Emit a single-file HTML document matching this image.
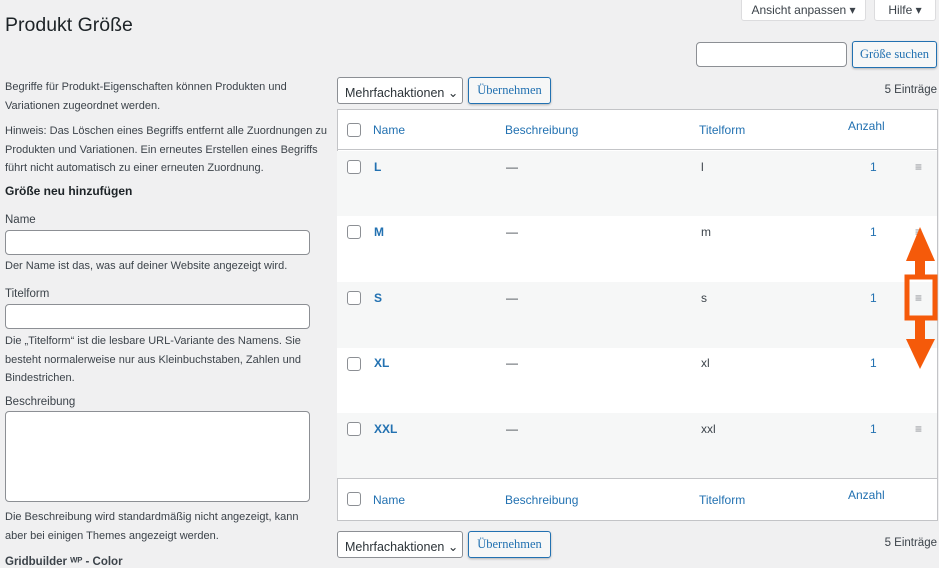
<!DOCTYPE html>
<html><head><meta charset="utf-8"><style>
*{box-sizing:border-box;margin:0;padding:0}
body{width:939px;height:562px;overflow:hidden;background:#f0f0f1;font-family:"Liberation Sans",sans-serif;color:#3c434a;font-size:12px;position:relative}
.a{position:absolute}
.btn{position:absolute;border:1px solid #2271b1;background:#f6f7f7;color:#2271b1;font-family:"Liberation Serif",serif;font-size:12.5px;text-align:center;border-radius:3px;box-shadow:0 1px 2px rgba(0,0,0,.25)}
.inp{position:absolute;background:#fff;border:1px solid #8c8f94;border-radius:4px}
.sel{position:absolute;background:#fff;border:1px solid #8c8f94;border-radius:3px;font-size:12.5px;padding:7px 0 0 7px;color:#2c3338}
.lnk{color:#2271b1}
.row{position:absolute;left:337px;width:600px}
.cb{position:absolute;left:10px;width:14px;height:14px;border:1px solid #8c8f94;border-radius:3px;background:#fff}
.t{position:absolute;font-size:12px}
p{line-height:18.5px}
</style></head><body>
<div class="a" style="left:741px;top:-5px;width:125px;height:26px;background:#fff;border:1px solid #dcdcde;border-radius:3px;text-align:center;padding-top:7px;font-size:12px">Ansicht anpassen ▾</div>
<div class="a" style="left:874px;top:-5px;width:62px;height:26px;background:#fff;border:1px solid #dcdcde;border-radius:3px;text-align:center;padding-top:7px;font-size:12px">Hilfe ▾</div>
<div class="a" style="left:5px;top:14px;font-size:19.5px;color:#1d2327">Produkt Größe</div>
<div class="inp" style="left:696px;top:42px;width:151px;height:25px"></div>
<div class="btn" style="left:852px;top:41px;width:85px;height:27px;line-height:25px">Größe suchen</div>

<div class="a" style="left:5px;top:78px;width:330px;font-size:11px">
<p>Begriffe für Produkt-Eigenschaften können Produkten und<br>Variationen zugeordnet werden.</p>
<p style="margin-top:7px">Hinweis: Das Löschen eines Begriffs entfernt alle Zuordnungen zu<br>Produkten und Variationen. Ein erneutes Erstellen eines Begriffs<br>führt nicht automatisch zu einer erneuten Zuordnung.</p>
</div>
<div class="a" style="left:5px;top:184px;font-weight:bold;font-size:12px;color:#1d2327">Größe neu hinzufügen</div>
<div class="a" style="left:5px;top:214px;font-size:11.5px">Name</div>
<div class="inp" style="left:5px;top:230px;width:305px;height:25px"></div>
<div class="a" style="left:5px;top:260px;font-size:11px">Der Name ist das, was auf deiner Website angezeigt wird.</div>
<div class="a" style="left:5px;top:288px;font-size:11.5px">Titelform</div>
<div class="inp" style="left:5px;top:304px;width:305px;height:25px"></div>
<div class="a" style="left:5px;top:332px;width:320px;font-size:11px"><p>Die „Titelform“ ist die lesbare URL-Variante des Namens. Sie<br>besteht normalerweise nur aus Kleinbuchstaben, Zahlen und<br>Bindestrichen.</p></div>
<div class="a" style="left:5px;top:396px;font-size:11.5px">Beschreibung</div>
<div class="inp" style="left:5px;top:411px;width:305px;height:91px"></div>
<div class="a" style="left:5px;top:508px;width:320px;font-size:11px"><p>Die Beschreibung wird standardmäßig nicht angezeigt, kann<br>aber bei einigen Themes angezeigt werden.</p></div>
<div class="a" style="left:5px;top:556px;font-size:11.5px;font-weight:bold">Gridbuilder ᵂᴾ - Color</div>

<div class="sel" style="left:337px;top:77px;width:126px;height:27px">Mehrfachaktionen ⌄</div>
<div class="btn" style="left:468px;top:77px;width:83px;height:27px;line-height:25px">Übernehmen</div>
<div class="a" style="right:2px;top:84px;font-size:11.5px">5 Einträge</div>

<div class="a" style="left:337px;top:109px;width:601px;height:412px;border:1px solid #c3c4c7;background:#fff"></div>
<div class="row" style="top:110px;height:40px;border-bottom:1px solid #c3c4c7">
<div class="cb" style="top:13px"></div>
<div class="t lnk" style="left:36px;top:13px">Name</div>
<div class="t lnk" style="left:168px;top:13px">Beschreibung</div>
<div class="t lnk" style="left:362px;top:13px">Titelform</div>
<div class="t lnk" style="left:511px;top:9px">Anzahl</div>
</div>
<div class="row" style="top:151px;height:65px;background:#f6f7f7"><div class="cb" style="top:9px"></div><div class="t lnk" style="left:37px;top:9px;font-weight:bold">L</div><div class="t" style="left:169px;top:9px">—</div><div class="t" style="left:364px;top:9px">l</div><div class="t lnk" style="left:533px;top:9px">1</div><div class="t" style="left:578px;top:9px;color:#8c8f94">≡</div></div>
<div class="row" style="top:216px;height:66px;background:#fff"><div class="cb" style="top:9px"></div><div class="t lnk" style="left:37px;top:9px;font-weight:bold">M</div><div class="t" style="left:169px;top:9px">—</div><div class="t" style="left:364px;top:9px">m</div><div class="t lnk" style="left:533px;top:9px">1</div><div class="t" style="left:578px;top:9px;color:#8c8f94">≡</div></div>
<div class="row" style="top:282px;height:66px;background:#f6f7f7"><div class="cb" style="top:9px"></div><div class="t lnk" style="left:37px;top:9px;font-weight:bold">S</div><div class="t" style="left:169px;top:9px">—</div><div class="t" style="left:364px;top:9px">s</div><div class="t lnk" style="left:533px;top:9px">1</div><div class="t" style="left:578px;top:9px;color:#8c8f94">≡</div></div>
<div class="row" style="top:348px;height:65px;background:#fff"><div class="cb" style="top:9px"></div><div class="t lnk" style="left:37px;top:8px;font-weight:bold">XL</div><div class="t" style="left:169px;top:8px">—</div><div class="t" style="left:364px;top:8px">xl</div><div class="t lnk" style="left:533px;top:8px">1</div></div>
<div class="row" style="top:413px;height:66px;background:#f6f7f7;border-bottom:1px solid #c3c4c7"><div class="cb" style="top:9px"></div><div class="t lnk" style="left:37px;top:9px;font-weight:bold">XXL</div><div class="t" style="left:169px;top:9px">—</div><div class="t" style="left:364px;top:9px">xxl</div><div class="t lnk" style="left:533px;top:9px">1</div><div class="t" style="left:578px;top:9px;color:#8c8f94">≡</div></div>
<div class="row" style="top:480px;height:40px">
<div class="cb" style="top:12px"></div>
<div class="t lnk" style="left:36px;top:13px">Name</div>
<div class="t lnk" style="left:168px;top:13px">Beschreibung</div>
<div class="t lnk" style="left:362px;top:13px">Titelform</div>
<div class="t lnk" style="left:511px;top:8px">Anzahl</div>
</div>

<div class="sel" style="left:337px;top:531px;width:126px;height:27px">Mehrfachaktionen ⌄</div>
<div class="btn" style="left:468px;top:531px;width:83px;height:27px;line-height:25px">Übernehmen</div>
<div class="a" style="right:2px;top:537px;font-size:11.5px">5 Einträge</div>

<svg class="a" style="left:0;top:0" width="939" height="562">
<g fill="#f55a0a">
<polygon points="920,227 935,261 925,261 925,276 915,276 915,261 906,261"/>
<polygon points="920,369 935,339 925,339 925,320 915,320 915,339 906,339"/>
</g>
<rect x="907" y="277" width="28" height="41" fill="none" stroke="#f55a0a" stroke-width="5"/>
</svg>
</body></html>
